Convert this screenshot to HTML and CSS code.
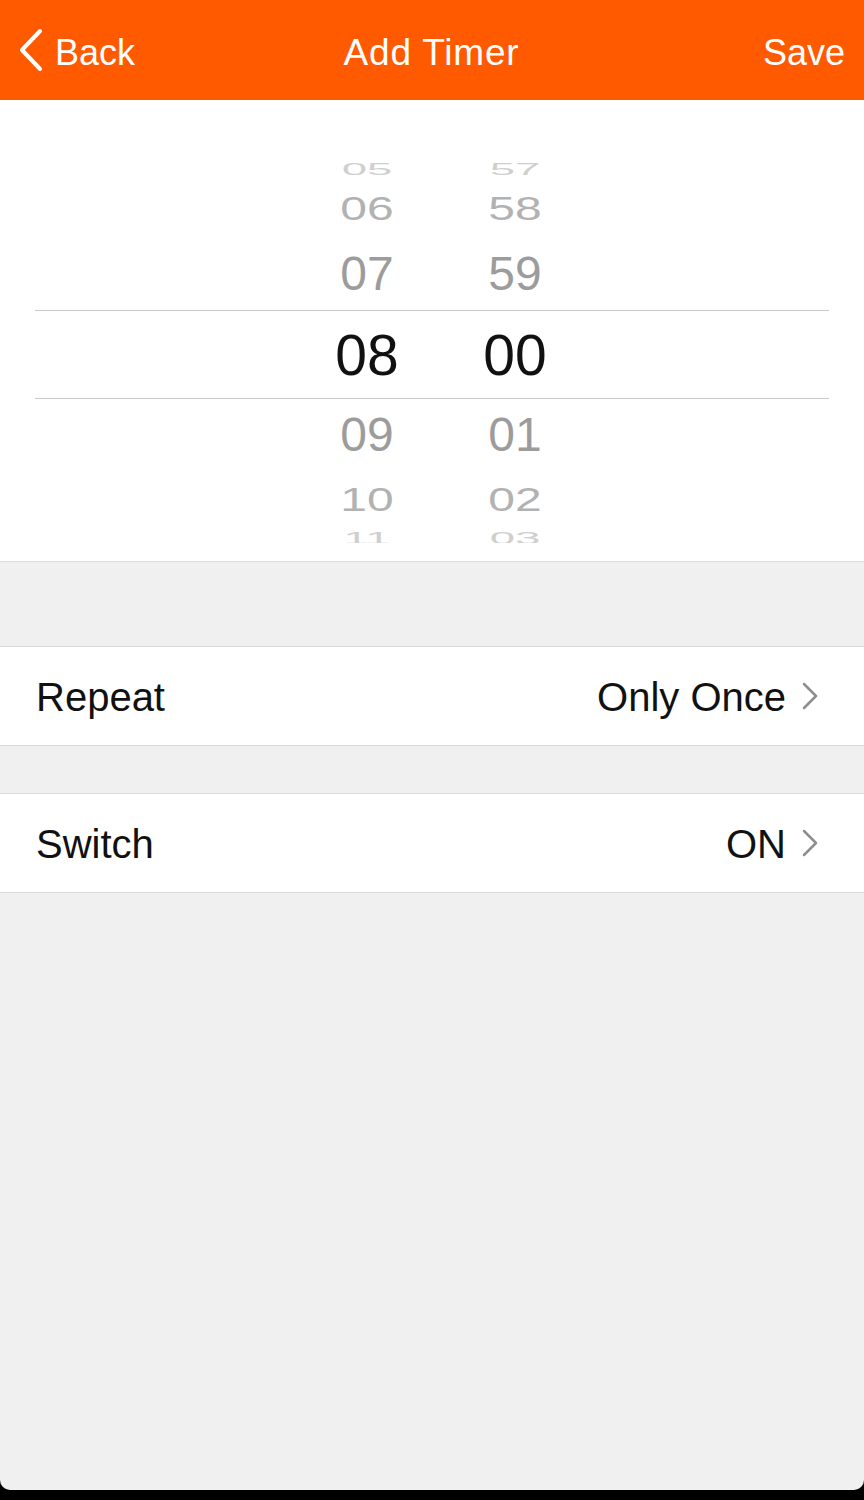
FILE: index.html
```html
<!DOCTYPE html>
<html lang="en">
<head>
    <meta charset="UTF-8">
    <meta name="viewport" content="width=device-width, initial-scale=1.0">
    <title>Add Timer</title>
    <link rel="stylesheet" href="styles.css">
</head>
<body>
    <div class="screen">
        <div class="header">
            <div class="back">
                <svg class="back-icon" width="26" height="44" viewBox="0 0 26 44">
                    <polyline points="22,3 4,22 22,41" fill="none" stroke="#fff" stroke-width="4" stroke-linecap="round" stroke-linejoin="round"/>
                </svg>
                <span>Back</span>
            </div>
            <div class="title">Add Timer</div>
            <div class="save">Save</div>
        </div>

        <!-- time picker wheel -->
        <div class="picker">
            <div class="wheel-row far"><span class="cell">05</span><span class="cell">57</span></div>
            <div class="wheel-row mid"><span class="cell">06</span><span class="cell">58</span></div>
            <div class="wheel-row near"><span class="cell">07</span><span class="cell">59</span></div>
            <div class="wheel-row selected"><span class="cell">08</span><span class="cell">00</span></div>
            <div class="wheel-row near"><span class="cell">09</span><span class="cell">01</span></div>
            <div class="wheel-row mid"><span class="cell">10</span><span class="cell">02</span></div>
            <div class="wheel-row far end"><span class="cell">11</span><span class="cell">03</span></div>
        </div>

        <div class="gap big"></div>

        <div class="option">
            <span class="label">Repeat</span>
            <span class="value">Only Once
                <svg class="chevron" width="20" height="30" viewBox="0 0 20 30">
                    <polyline points="4,3 16,15 4,27" fill="none" stroke="#8e8e8e" stroke-width="2.5" stroke-linecap="round" stroke-linejoin="round"/>
                </svg>
            </span>
        </div>

        <div class="gap small"></div>

        <div class="option">
            <span class="label">Switch</span>
            <span class="value">ON
                <svg class="chevron" width="20" height="30" viewBox="0 0 20 30">
                    <polyline points="4,3 16,15 4,27" fill="none" stroke="#8e8e8e" stroke-width="2.5" stroke-linecap="round" stroke-linejoin="round"/>
                </svg>
            </span>
        </div>
    </div>
</body>
</html>
```

FILE: styles.css
```css
/* Basic styling */
body {
    margin: 0;
    background-color: #000;
    font-family: "Liberation Sans", Arial, sans-serif;
}

.screen {
    height: 1490px;
    background-color: #f0f0f0;
    border-radius: 0 0 10px 10px;
    overflow: hidden;
}

/* Orange navigation bar */
.header {
    height: 100px;
    background-color: #ff5a00;
    color: #fff;
    display: grid;
    grid-template-columns: 1fr auto 1fr;
    align-items: center;
    padding: 6px 19px 0 18px;
    box-sizing: border-box;
    font-size: 36px;
}

.back {
    display: flex;
    align-items: center;
    gap: 11px;
}

.back-icon {
    margin-top: -6px;
}

.title {
    font-size: 37px;
    letter-spacing: 0.8px;
}

.save {
    justify-self: end;
}

/* Picker wheel */
.picker {
    height: 462px;
    background-color: #fff;
    border-bottom: 1px solid #dcdcdc;
    box-sizing: border-box;
    padding-top: 60px;
}

.wheel-row {
    display: flex;
    justify-content: center;
    margin: 0 35px;
    padding-left: 18px;
    overflow: hidden;
    font-size: 48px;
}

.cell {
    width: 148px;
    text-align: center;
}

.wheel-row.far {
    height: 20px;
    line-height: 20px;
    color: #cfcfcf;
}

.wheel-row.far .cell {
    transform: scale(0.95, 0.33);
}

.wheel-row.far.end {
    height: 14px;
    align-items: flex-start;
}

.wheel-row.mid {
    height: 58px;
    line-height: 58px;
    color: #b2b2b2;
}

.wheel-row.mid .cell {
    transform: scaleY(0.7);
}

.wheel-row.near {
    height: 72px;
    line-height: 72px;
    color: #9c9c9c;
}

.wheel-row.selected {
    height: 89px;
    line-height: 89px;
    font-size: 57px;
    color: #111;
    border-top: 1px solid #c8c8c8;
    border-bottom: 1px solid #c8c8c8;
    box-sizing: border-box;
}

/* Grey spacing between groups */
.gap.big {
    height: 84px;
}

.gap.small {
    height: 47px;
}

/* Setting rows */
.option {
    height: 100px;
    background-color: #fff;
    border-top: 1px solid #dadada;
    border-bottom: 1px solid #dadada;
    box-sizing: border-box;
    display: flex;
    align-items: center;
    justify-content: space-between;
    padding: 3px 44px 0 36px;
    font-size: 40px;
    color: #111;
}

.value {
    display: flex;
    align-items: center;
    gap: 14px;
}

.chevron {
    margin-top: -4px;
}
```
